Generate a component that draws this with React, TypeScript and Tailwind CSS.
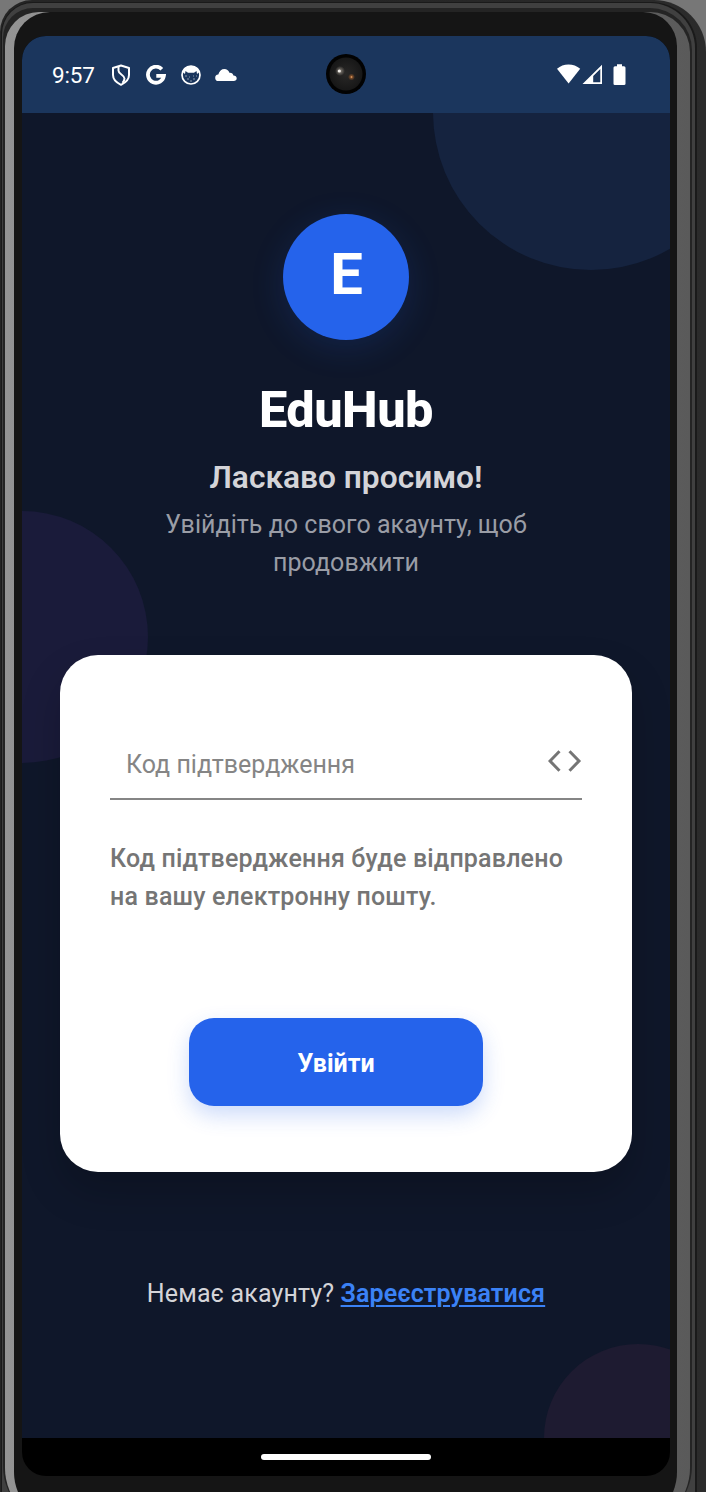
import type { ReactNode } from "react";

function ShieldIcon() {
  return (
    <svg width="20" height="22" viewBox="0 0 20 22" fill="none" stroke="white" strokeWidth="2" strokeLinejoin="round">
      <path d="M10 1.500 2 4v7c0 4.500 3.200 7.500 8 9.800 4.800-2.300 8-5.300 8-9.800V4z" />
      <path d="M7.500 2.800v4c0 3.200 6 4.200 6 7.700 0 1.500-.7 2.800-2 4.300" />
    </svg>
  );
}

function GoogleIcon() {
  return (
    <svg width="20" height="20" viewBox="0 0 20 20" fill="none" stroke="white" strokeWidth="3.800">
      <path d="M15.800 4.200A8 8 0 1 0 17.900 10.800H10.300" />
    </svg>
  );
}

function CatIcon() {
  return (
    <svg width="20" height="20" viewBox="0 0 20 20">
      <circle cx="10" cy="10" r="9" fill="none" stroke="white" strokeWidth="1.700" />
      <path d="M1.500 7Q3.500 1 10 1t8.500 6L16 9l-.5-3-2.500 1.800H7L4.500 6 4 9z" fill="white" />
      <path d="M4 11h2m2 1h1m3-1h1m2 0h1M6 14h2m4 0h2m-5 2h2" stroke="white" strokeWidth="1" opacity=".5" />
    </svg>
  );
}

function CloudIcon() {
  return (
    <svg width="22" height="14" viewBox="0 0 22 14" fill="white">
      <path d="M3.500 13A3.200 3.200 0 0 1 3.300 6.600C4.300 3 6.500 1 9.400 1c2.400 0 4 1.200 5 3.700 2.400-.2 3.700 1 4 2.800 2 .2 3.300 1.200 3.300 2.800 0 1.700-1.200 2.700-2.900 2.700z" />
    </svg>
  );
}

function SystemIcons() {
  return (
    <svg width="70" height="22" viewBox="0 0 70 22" fill="white">
      <path d="M0 4.700C3.300 1.900 7.100.4 11.500.4S19.900 1.900 23.200 4.700L11.600 19.600z" />
      <path fillRule="evenodd" d="M25.500 20 45 .8V20zM36.200 12v6.300h7.100V5z" />
      <path d="M60 .3h5v2h2q1.500 0 1.500 1.500v16q0 1.200-1.500 1.200h-9.200q-1.300 0-1.300-1.200v-16q0-1.500 1.500-1.500h2z" />
    </svg>
  );
}

function Camera() {
  return (
    <div className="-mt-px flex size-10 items-center justify-center rounded-full bg-[#020202]">
      <svg width="34" height="34" viewBox="0 0 34 34">
        <defs>
          <radialGradient id="lens">
            <stop offset="0" stopColor="#292827" />
            <stop offset="1" stopColor="#171717" />
          </radialGradient>
          <radialGradient id="glint">
            <stop offset="0" stopColor="#8c857c" />
            <stop offset="1" stopColor="#8c857c" stopOpacity="0" />
          </radialGradient>
          <radialGradient id="ember">
            <stop offset="0" stopColor="#a8622e" />
            <stop offset="1" stopColor="#a8622e" stopOpacity="0" />
          </radialGradient>
        </defs>
        <circle cx="17" cy="17" r="16.500" fill="url(#lens)" />
        <circle cx="11" cy="14" r="5" fill="url(#glint)" />
        <circle cx="10.300" cy="14" r="1.600" fill="#f1eee9" />
        <circle cx="22.500" cy="20" r="3.500" fill="url(#ember)" />
        <circle cx="22.500" cy="20" r=".8" fill="#e9a96c" />
      </svg>
    </div>
  );
}

function StatusBar() {
  return (
    <header className="grid h-[77px] shrink-0 grid-cols-[1fr_40px_1fr] items-center bg-[#1b365d]">
      <div className="flex items-center pl-[30px]">
        <span className="w-[59px] pt-0.5 text-[22.500px] leading-none tracking-[-0.2px] text-white">9:57</span>
        <div className="flex items-center gap-[15px]">
          <ShieldIcon />
          <GoogleIcon />
          <CatIcon />
          <div className="-ml-px"><CloudIcon /></div>
        </div>
      </div>
      <Camera />
      <div className="flex justify-end pr-[43px]">
        <SystemIcons />
      </div>
    </header>
  );
}

function LoginCard() {
  return (
    <section className="mx-[38px] mt-[73px] flex h-[517px] shrink-0 flex-col rounded-[38px] bg-white px-[50px] pt-[75px] shadow-[0_20px_40px_rgba(0,0,0,0.2)]">
      <div className="flex h-[70px] items-center justify-between border-b-2 border-[#858585] pl-4">
        <span className="pt-0.5 text-[25px] leading-[38px] text-[#858585]">Код підтвердження</span>
        <svg className="-mt-[7px]" width="34" height="22" viewBox="0 0 34 22" fill="none" stroke="#757575" strokeWidth="3">
          <path d="M11.500 1.200 2 11l9.500 9.800M21.500 1.200 31 11l-9.500 9.800" />
        </svg>
      </div>
      <p className="mt-[40px] text-[25px] leading-[38px] font-medium tracking-[0.18px] whitespace-nowrap text-[#757575]">
        Код підтвердження буде відправлено
        <br />
        на вашу електронну пошту.
      </p>
      <button className="mt-[102px] ml-[79px] h-[88px] w-[294px] rounded-[25px] bg-[#2563eb] pt-[3px] text-[25px] font-bold text-white shadow-[0_9px_21px_rgba(37,99,235,0.23)]">
        Увійти
      </button>
    </section>
  );
}

function LoginScreen() {
  return (
    <main className="relative isolate flex h-[1325px] shrink-0 flex-col overflow-hidden bg-[#0f172a]">
      <div className="absolute -top-[159px] left-[411px] -z-10 size-[316px] rounded-full bg-[#15233f]" />
      <div className="absolute top-[398px] -left-[126px] -z-10 size-[252px] rounded-full bg-[#1a1b3a]" />
      <div className="absolute top-[1231px] left-[522px] -z-10 size-[188px] rounded-full bg-[#1e1b31]" />
      <div className="mt-[100.500px] flex flex-col items-center text-center">
        <div className="flex size-[126px] items-center justify-center rounded-full bg-[#2563eb] pb-1 pl-px text-[58px] font-bold text-white shadow-[0_8px_34px_rgba(37,99,235,0.16)]">
          E
        </div>
        <h1 className="mt-[38px] text-[50.500px] leading-[64px] font-extrabold tracking-[-0.5px] text-white">EduHub</h1>
        <h2 className="mt-[16.500px] text-[31.700px] leading-[40px] font-semibold text-[#d4d4d8]">Ласкаво просимо!</h2>
        <p className="mt-[8px] text-[25px] leading-[38px] tracking-[0.04px] whitespace-nowrap text-[#9a9da6]">
          Увійдіть до свого акаунту, щоб
          <br />
          продовжити
        </p>
      </div>
      <LoginCard />
      <p className="mt-[103px] text-center text-[25px] leading-[38px] tracking-[0.14px] text-[#d4d4d8]">
        Немає акаунту?{" "}
        <a className="font-semibold text-[#3b82f6] underline decoration-[1.500px] underline-offset-[3px]">Зареєструватися</a>
      </p>
    </main>
  );
}

function DeviceFrame({ children }: { children: ReactNode }) {
  return (
    <div className="h-[1492px] w-[706px] overflow-hidden bg-[#777] font-['Roboto',sans-serif]">
      <div className="h-[1530px] rounded-tl-[32px] rounded-tr-[52px] bg-linear-to-r from-[#252525] from-50% to-[#2b2b2b] to-100% pt-0.5 pr-[9px] pl-px">
        <div className="h-full rounded-tl-[32px] rounded-tr-[46px] bg-[#1a1a1a] pt-px pr-[2px] pl-px">
          <div className="h-full rounded-tl-[31px] rounded-tr-[45px] bg-[#404040] pt-[5px] pr-[3px] pl-px">
            <div className="h-[1518px] rounded-tl-[30px] rounded-tr-[42px] rounded-b-[60px] bg-[#242424] pt-[4px] pr-[2px] pl-[2px]">
              <div className="h-[1514px] rounded-tl-[34px] rounded-tr-[40px] rounded-b-[58px] bg-linear-to-r from-[#949494] to-[#5a5a5a] pr-[13px] pl-[9px]">
                <div className="h-[1512px] rounded-tl-[36px] rounded-tr-[34px] rounded-b-[52px] bg-[#151515] pt-6 pr-[7px] pl-[8px]">
                  {children}
                </div>
              </div>
            </div>
          </div>
        </div>
      </div>
    </div>
  );
}

export default function App() {
  return (
    <DeviceFrame>
      <div className="flex h-[1440px] w-[648px] flex-col overflow-hidden rounded-[24px] bg-black">
        <StatusBar />
        <LoginScreen />
        <footer className="flex h-[38px] items-center justify-center">
          <div className="h-1.5 w-[170px] rounded-full bg-white" />
        </footer>
      </div>
    </DeviceFrame>
  );
}
